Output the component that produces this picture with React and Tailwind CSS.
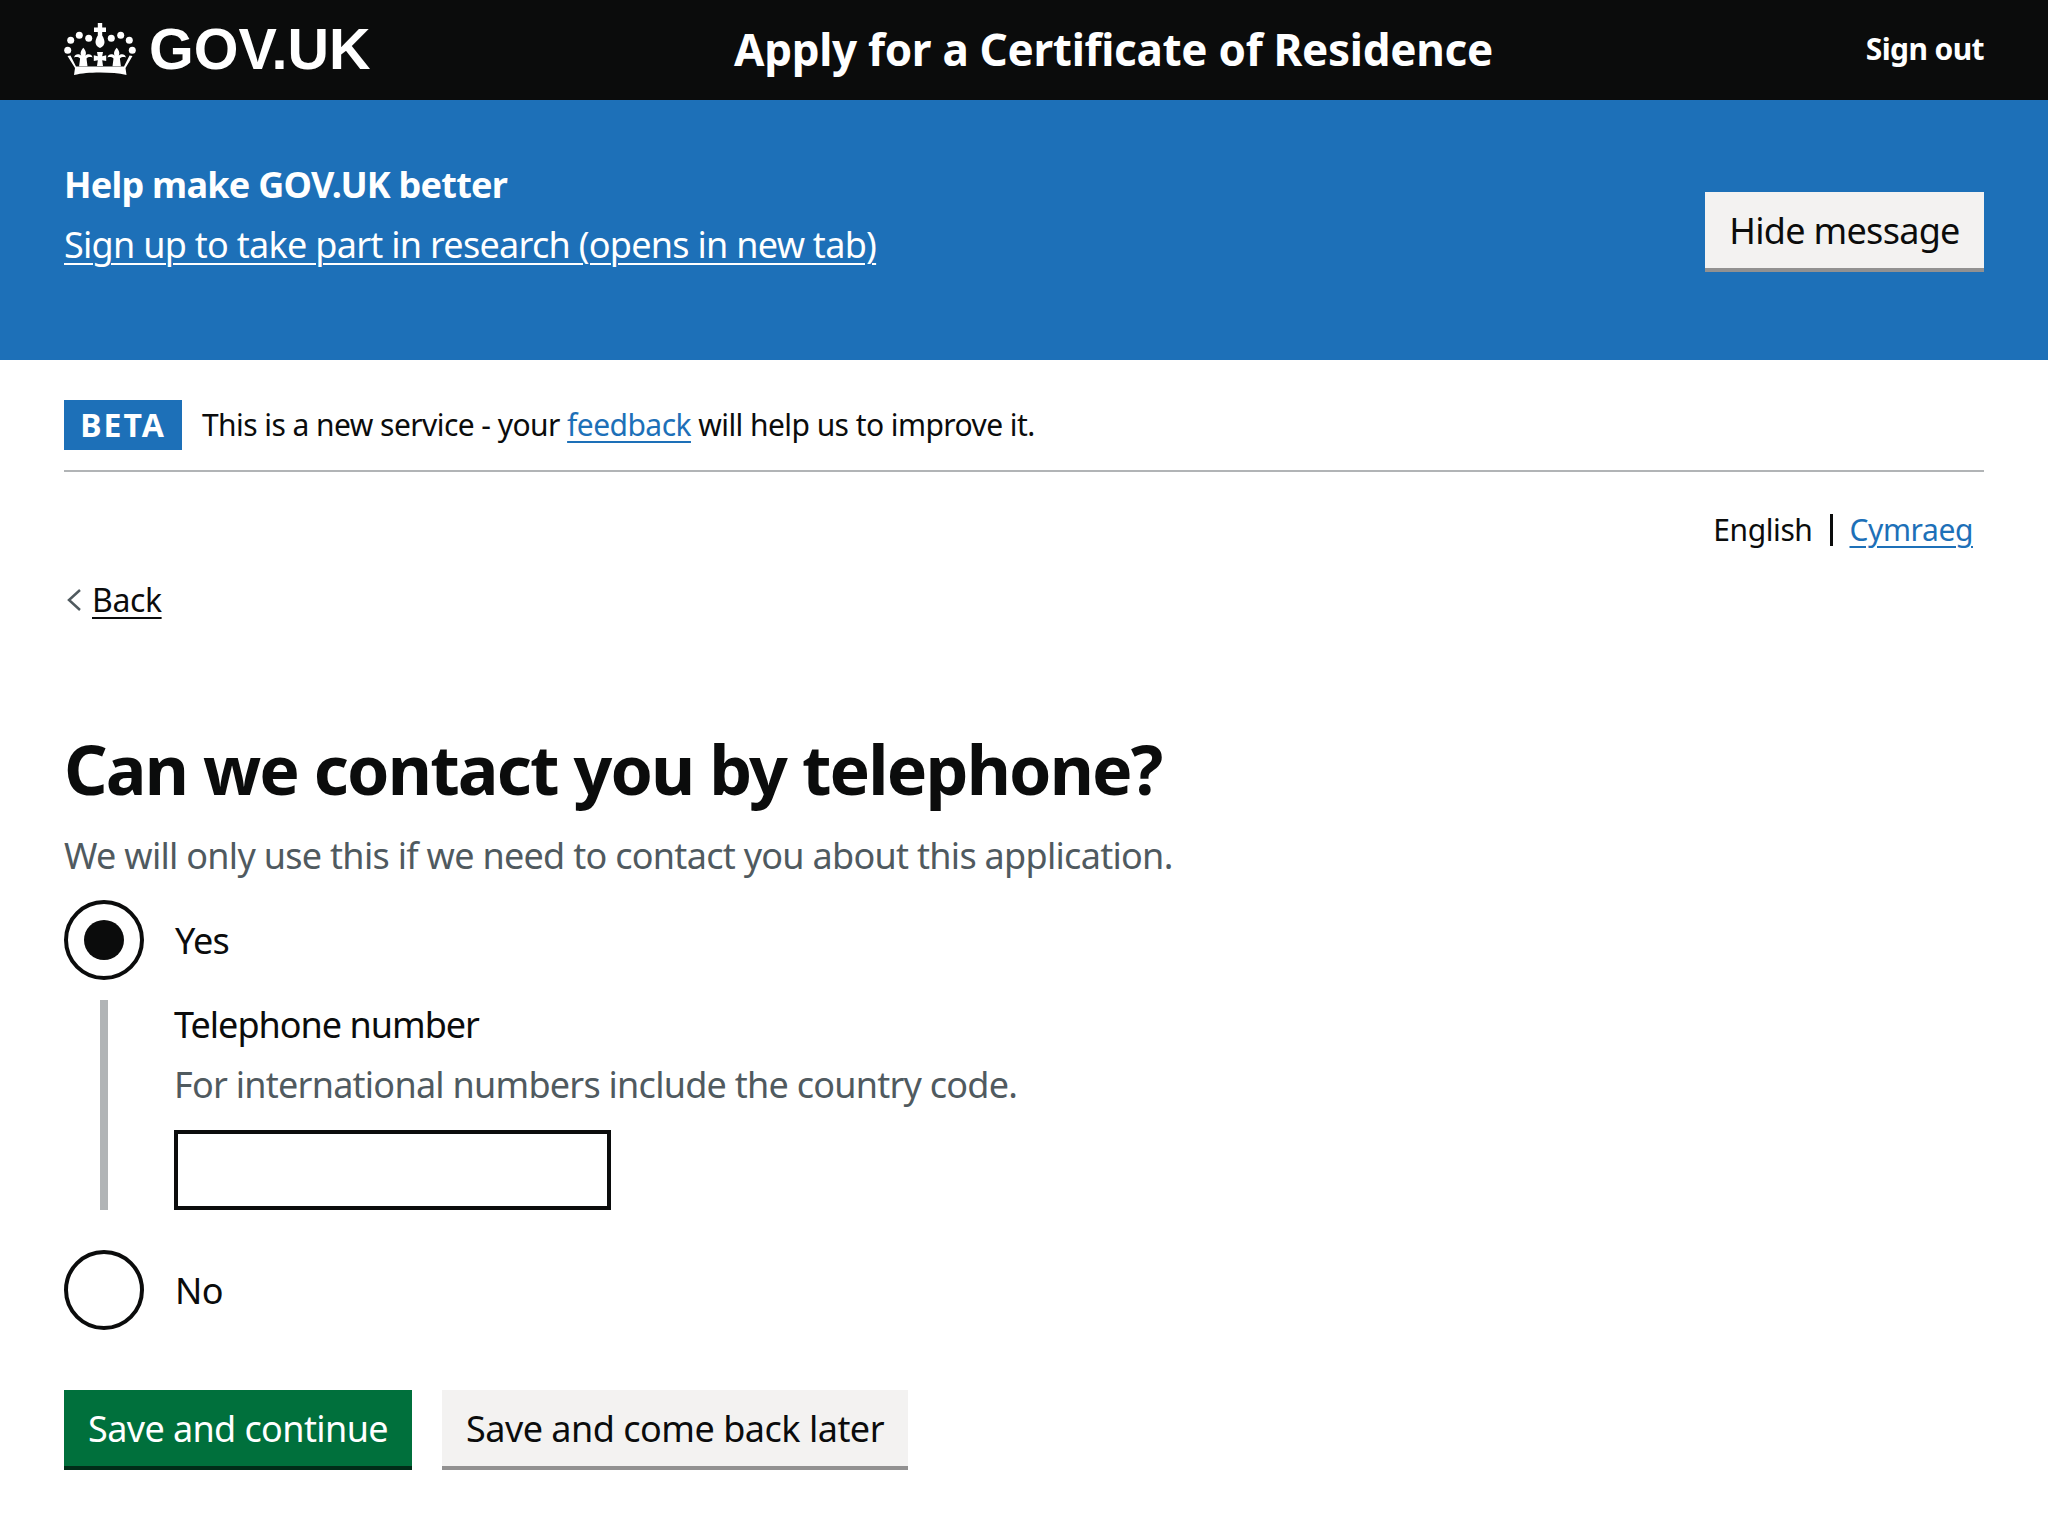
const font = "font-['Noto_Sans','Liberation_Sans',sans-serif]";

const fleur = "M19.3 24.7c2.300 3 3.500 5 2 8 2.200-2 6.500-2 7.200 1.800-2.500-.8-4.500-.3-6 1l1 7.800h-8.400l1-7.800c-1.500-1.300-3.500-1.800-6-1 .7-3.800 5-3.800 7.200-1.800-1.500-3-.3-5 2-8z";

function Crown() {
  return (
    <svg width="72" height="54" viewBox="0 0 72 54" fill="#fff" className="shrink-0">
      <path d="M33.800 0h4.400v4.400H42V9h-3.800v3.500c1.600 2.500 2.300 5 2.300 6.700 0 2.600-1.800 4.800-4.500 5.800-2.700-1-4.500-3.200-4.500-5.800 0-1.700.7-4.200 2.300-6.700V9H30V4.400h3.800z" />
      <circle cx="15.300" cy="12.300" r="3.500" />
      <circle cx="24.700" cy="15.300" r="3.500" />
      <circle cx="47.300" cy="15.300" r="3.500" />
      <circle cx="56.700" cy="12.300" r="3.500" />
      <circle cx="6.700" cy="17.300" r="3.500" />
      <circle cx="65.300" cy="17.300" r="3.500" />
      <circle cx="3.700" cy="27.300" r="3.500" />
      <circle cx="68.300" cy="27.300" r="3.500" />
      <path d="M33 29h6l-.8 4.200 4-.9v5.800l-4-.9.8 5.800h-6l.8-5.800-4 .9v-5.800l4 .9z" />
      <path d={fleur} />
      <path d={fleur} transform="translate(33.400)" />
      <path d="M3.500 33l3-.5 5.500 11h48l5.500-11 3 .5-7 12 1 7c-8-1.800-16-2.500-26.500-2.500S18 50.200 10 52l1-7z" />
    </svg>
  );
}

function Radio({ checked, label }) {
  return (
    <div className="flex items-center">
      <span className="flex h-20 w-20 items-center justify-center rounded-full border-4 border-[#0b0c0c]">
        {checked && <span className="h-10 w-10 rounded-full bg-[#0b0c0c]" />}
      </span>
      <span className="ml-[31px] pt-[2px] text-[36px] leading-none tracking-[-0.7px] text-[#0b0c0c]">{label}</span>
    </div>
  );
}

export default function App() {
  return (
    <div className={`${font} min-h-[1536px] bg-white text-[#0b0c0c]`}>
      <header className="flex h-[100px] items-center justify-between bg-[#0b0c0c] px-16 text-white">
        <div className="flex w-[670px] items-center gap-[13px]">
          <Crown />
          <span className="font-['Liberation_Sans',sans-serif] text-[57.500px] font-bold leading-none">GOV.UK</span>
        </div>
        <div className="mr-auto -mt-[2px] text-[44px] font-bold leading-none tracking-[-0.3px]">Apply for a Certificate of Residence</div>
        <div className="-mt-[2px] text-[30px] font-bold leading-none tracking-[-0.6px]">Sign out</div>
      </header>

      <section className="flex h-[260px] items-start justify-between bg-[#1d70b8] px-16 pt-[92px] text-white">
        <div className="-mt-[25px]">
          <div className="text-[36px] font-bold leading-none tracking-[-0.75px]">Help make GOV.UK better</div>
          <a className="mt-[24px] block text-[36px] leading-none tracking-[-0.72px] underline decoration-2 underline-offset-[5px]">
            Sign up to take part in research (opens in new tab)
          </a>
        </div>
        <button className="h-20 w-[279px] border-b-4 border-[#929191] bg-[#f3f2f1] pt-[2px] text-[36px] leading-none tracking-[-0.7px] text-[#0b0c0c]">
          Hide message
        </button>
      </section>

      <main className="px-16">
        <div className="flex items-center border-b-2 border-[#b1b4b6] pb-5 pt-10">
          <strong className="flex h-[50px] w-[118px] items-center justify-center bg-[#1d70b8] text-[32px] font-bold leading-none tracking-[2px] text-white">
            BETA
          </strong>
          <p className="ml-5 text-[30px] leading-none tracking-[-0.56px]">
            This is a new service - your{" "}
            <a className="text-[#1d70b8] underline decoration-2 underline-offset-[5px]">feedback</a> will help us to improve it.
          </p>
        </div>

        <div className="mt-[42px] flex items-center justify-end pr-[11px] text-[30px] leading-none tracking-[-0.4px]">
          <span>English</span>
          <span className="mx-[17px] h-8 w-[3px] bg-[#0b0c0c]" />
          <a className="text-[#1d70b8] underline decoration-2 underline-offset-[5px]">Cymraeg</a>
        </div>

        <a className="mt-[38px] flex items-center text-[32px] leading-none tracking-[-0.4px]">
          <svg width="16" height="24" viewBox="0 0 16 24" fill="none" stroke="#505a5f" strokeWidth="2.5" className="ml-[2px]">
            <path d="M14 2 3 12l11 10" />
          </svg>
          <span className="ml-[10px] underline decoration-2 underline-offset-[5px]">Back</span>
        </a>

        <h1 className="mt-[119px] text-[68px] font-bold leading-none tracking-[-1.84px]">Can we contact you by telephone?</h1>
        <p className="mt-[35px] text-[36px] leading-none tracking-[-0.71px] text-[#505a5f]">
          We will only use this if we need to contact you about this application.
        </p>

        <div className="mt-[26px]">
          <Radio checked label="Yes" />
          <div className="ml-9 mt-5 border-l-8 border-[#b1b4b6] pl-[66px]">
            <label className="block pt-[7px] text-[36px] leading-none tracking-[-1px]">Telephone number</label>
            <p className="mt-[24px] text-[36px] leading-none tracking-[-0.75px] text-[#505a5f]">For international numbers include the country code.</p>
            <input className="mt-[27px] block h-20 w-[437px] border-4 border-[#0b0c0c] bg-white" />
          </div>
          <div className="mt-10">
            <Radio label="No" />
          </div>
        </div>

        <div className="mt-[60px] flex gap-[30px]">
          <button className="h-20 w-[348px] border-b-4 border-[#002d18] bg-[#00703c] pt-[2px] text-[36px] leading-none tracking-[-0.6px] text-white">Save and continue</button>
          <button className="h-20 w-[466px] border-b-4 border-[#929191] bg-[#f3f2f1] pt-[2px] text-[36px] leading-none tracking-[-0.5px] text-[#0b0c0c]">Save and come back later</button>
        </div>
      </main>
    </div>
  );
}
